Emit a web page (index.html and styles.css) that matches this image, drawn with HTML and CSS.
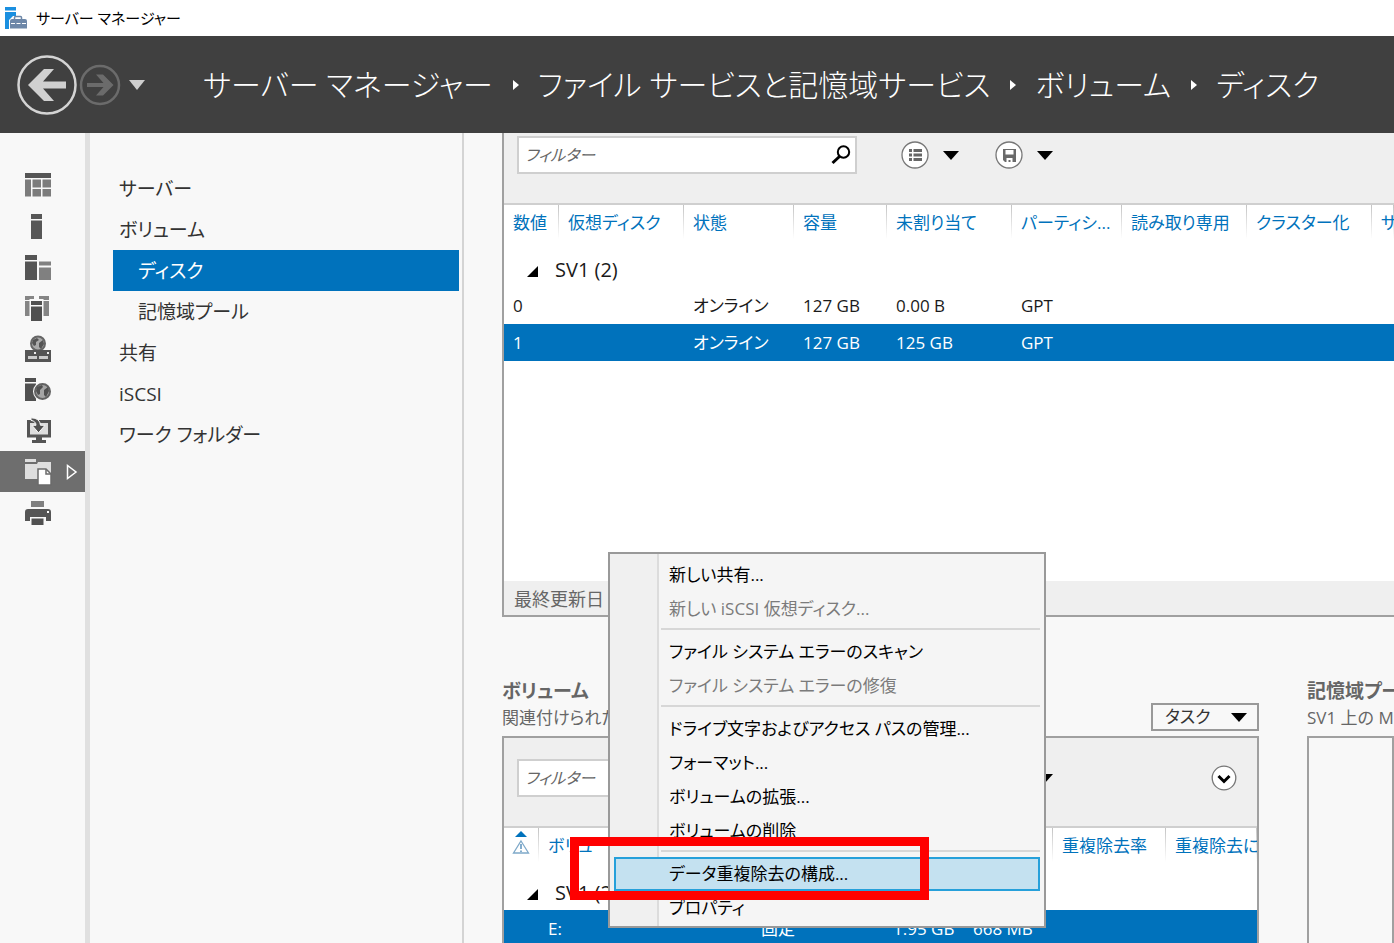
FILE: index.html
```html
<!DOCTYPE html>
<html lang="ja">
<head>
<meta charset="utf-8">
<title>サーバー マネージャー</title>
<link rel="stylesheet" href="styles.css">
</head>
<body>
<div class="titlebar">
  <svg width="24" height="24" viewBox="0 0 24 24" aria-hidden="true">
    <path d="M1 1h11v3.500H1zM1 6h11v4H9L5 14v9H1z" fill="#1a8fe0"/>
    <path d="M10.500 13.500v-2q0-1 1-1h5q1 0 1 1v2" fill="none" stroke="#6d87a8" stroke-width="1.500"/>
    <path d="M6 22.500V15q0-2 2-2h13q2 0 2 2v7.500z" fill="#6d87a8"/>
    <path d="M7 17.500h4M12.500 17.500h4M18 17.500h4" stroke="#fff" stroke-width="1"/>
  </svg>
  <span>サーバー マネージャー</span>
</div>
<header class="header">
  <div class="history">
    <button class="round" aria-label="戻る">
      <svg width="60" height="60" viewBox="0 0 60 60"><circle cx="30" cy="30" r="28.500" fill="none" stroke="#d4d4d4" stroke-width="2.500"/><path d="M11 30 27 14h10L26 26.500h23v7H26L37 46H27z" fill="#d0d0d0"/></svg>
    </button>
    <button class="round" aria-label="進む">
      <svg width="42" height="42" viewBox="0 0 42 42"><circle cx="21" cy="21" r="19" fill="none" stroke="#6b6b6b" stroke-width="2.500"/><path d="M34.500 21 24 10.500h-7L24.500 19H8v4h16.500L17 31.500h7z" fill="#6b6b6b"/></svg>
    </button>
    <button class="round drop" aria-label="履歴">
      <svg width="16" height="10" viewBox="0 0 16 10"><path d="M0 0h16L8 10z" fill="#cfcfcf"/></svg>
    </button>
  </div>
  <nav class="crumbs" aria-label="階層">
    <a href="#">サーバー マネージャー</a><i class="sep"></i><a href="#">ファイル サービスと記憶域サービス</a><i class="sep"></i><a href="#">ボリューム</a><i class="sep"></i><a href="#">ディスク</a>
  </nav>
</header>
<div class="body">
  <nav class="rail" aria-label="役割">
    <a href="#" aria-label="ダッシュボード"><svg width="28" height="28" viewBox="0 0 28 28"><path d="M1 2h26v5H1z" fill="#555"/><path d="M1 8.500h6v17H1zM8.500 8.500h8.500v8H8.500zM18.500 8.500H27v8h-8.500zM8.500 18h8.500v7.500H8.500zM18.500 18H27v7.500h-8.500z" fill="#7c7c7c"/></svg></a>
    <a href="#" aria-label="ローカル サーバー"><svg width="28" height="28" viewBox="0 0 28 28"><path d="M7 2h11v5H7zM7 8.500h11V27H7z" fill="#575757"/></svg></a>
    <a href="#" aria-label="すべてのサーバー"><svg width="28" height="28" viewBox="0 0 28 28"><path d="M1 2h12v5H1zM1 8.500h12V27H1z" fill="#555"/><path d="M15 8.500h12v4H15zM15 14.500h12V27H15z" fill="#808080"/></svg></a>
    <a href="#" aria-label="AD DS"><svg width="28" height="28" viewBox="0 0 28 28"><path d="M1 2h9v4H1zM1 7h9v15H1zM15 2h10v4H15zM15 7h10v15H15z" fill="#858585"/><path d="M5.500 5h14v22h-14z" fill="#f8f8f8"/><path d="M7 7h11v4H7zM7 12.500h11V27H7z" fill="#505050"/></svg></a>
    <a href="#" aria-label="DHCP"><svg width="28" height="28" viewBox="0 0 28 28"><circle cx="14" cy="8.500" r="7" fill="#aaa" stroke="#666" stroke-width="2"/><path d="M9 5l4-2 2 2-3 2v3l-2 1-2-3zM15 8l4-3 1 4-3 5-2-2z" fill="#555"/><path d="M1 15h26v12H1z" fill="#555"/><path d="M4 21h9v3H4zM15 21h9v3h-9z" fill="#ccc"/><path d="M10 17h2v2h-2zM23 17h2v2h-2z" fill="#eee"/></svg></a>
    <a href="#" aria-label="DNS"><svg width="28" height="28" viewBox="0 0 28 28"><path d="M1 2h11v4H1zM1 7.500h11V25H1z" fill="#505050"/><circle cx="18.500" cy="15.500" r="9.500" fill="#f8f8f8"/><circle cx="18.500" cy="15.500" r="7.500" fill="#a5a5a5" stroke="#626262" stroke-width="2"/><path d="M13 11l5-2 1 2-3 3v4l-2 1-2-4zM20 14l4-3 1 4-3 6-2-2z" fill="#505050"/></svg></a>
    <a href="#" aria-label="リモート アクセス"><svg width="28" height="28" viewBox="0 0 28 28"><path d="M4.500 4.500h21v14.500h-21z" fill="#ddd" stroke="#555" stroke-width="3"/><path d="M12 20h6v3h4v3H8v-3h4z" fill="#555"/><path d="M7 .8q9 .2 9.500 7.500h4.500l-6.500 7.500-6.500-7.500h4q0-4-5-5z" fill="#505050" stroke="#f8f8f8" stroke-width="1"/></svg></a>
    <a href="#" class="on" aria-label="ファイル サービス"><svg width="28" height="28" viewBox="0 0 28 28"><path d="M1 4V1h11v3zM1 6h12l1-2h13v17H1z" fill="#dedede"/><path d="M14 11h8l5 5v11H14z" fill="#fff" stroke="#6b6b6b" stroke-width="1.500"/><path d="M22 11v5h5" fill="none" stroke="#6b6b6b" stroke-width="1.500"/></svg><svg class="more" width="12" height="16" viewBox="0 0 12 16"><path d="M1.500 1.500v13l8.500-6.500z" fill="none" stroke="#fff" stroke-width="1.500"/></svg></a>
    <a href="#" aria-label="印刷サービス"><svg width="28" height="28" viewBox="0 0 28 28"><path d="M7 2h13v6H7z" fill="#808080"/><path d="M1 13q0-3 3-3h20q3 0 3 3v9h-5v-4H6v4H1z" fill="#555"/><path d="M7.500 19.500h12V26h-12z" fill="#505050"/><path d="M23 12h2v2h-2z" fill="#fff"/></svg></a>
  </nav>
  <nav class="side" aria-label="ファイル サービスと記憶域サービス">
    <a href="#">サーバー</a>
    <a href="#">ボリューム</a>
    <a href="#" class="sub on">ディスク</a>
    <a href="#" class="sub">記憶域プール</a>
    <a href="#">共有</a>
    <a href="#">iSCSI</a>
    <a href="#">ワーク フォルダー</a>
  </nav>
  <main class="main">
    <section class="panel disks">
      <div class="toolbar">
        <div class="filter">
          <input type="text" placeholder="フィルター" aria-label="フィルター">
          <svg width="20" height="20" viewBox="0 0 20 20" aria-hidden="true"><circle cx="12.500" cy="7" r="5.700" fill="none" stroke="#000" stroke-width="2"/><path d="M8.500 11.500 1.500 18" stroke="#000" stroke-width="3"/></svg>
        </div>
        <button class="tool" aria-label="条件"><svg width="28" height="28" viewBox="0 0 28 28"><circle cx="14" cy="14" r="13" fill="#fff" stroke="#777" stroke-width="1.300"/><path d="M8 8h3v3H8zM8 12.500h3v3H8zM8 17h3v3H8zM12.500 8H21v3h-8.500zM12.500 12.500H21v3h-8.500zM12.500 17H21v3h-8.500z" fill="#666"/></svg><i class="caret"></i></button>
        <button class="tool" aria-label="保存"><svg width="28" height="28" viewBox="0 0 28 28"><circle cx="14" cy="14" r="13" fill="#fff" stroke="#777" stroke-width="1.300"/><path d="M8 8h13v13H10l-2-2z" fill="#6a6a6a"/><path d="M10.500 9h8v4.500h-8zM11.500 17h6v4h-2v-2h-2v2h-2z" fill="#fff"/></svg><i class="caret"></i></button>
      </div>
      <table class="grid">
        <colgroup><col class="w55"><col class="w125"><col class="w110"><col class="w93"><col class="w125"><col class="w110"><col class="w125"><col class="w125"><col></colgroup>
        <thead><tr><th>数値</th><th>仮想ディスク</th><th>状態</th><th>容量</th><th>未割り当て</th><th>パーティシ...</th><th>読み取り専用</th><th>クラスター化</th><th>サ</th></tr></thead>
        <tbody>
          <tr class="group"><td colspan="9"><i class="tri"></i>SV1 (2)</td></tr>
          <tr><td>0</td><td></td><td>オンライン</td><td>127 GB</td><td>0.00 B</td><td>GPT</td><td></td><td></td><td></td></tr>
          <tr class="sel"><td>1</td><td></td><td>オンライン</td><td>127 GB</td><td>125 GB</td><td>GPT</td><td></td><td></td><td></td></tr>
        </tbody>
      </table>
      <div class="status">最終更新日</div>
    </section>
    <div class="lower">
      <section class="tile volumes">
        <div class="head">
          <div><h2>ボリューム</h2><p>関連付けられた</p></div>
          <button class="task">タスク<i class="caret"></i></button>
        </div>
        <div class="panel full">
          <div class="toolbar tall">
            <div class="filter"><input type="text" placeholder="フィルター" aria-label="ボリュームのフィルター"></div>
            <button class="tool" aria-label="条件"><i class="blank"></i><i class="caret"></i></button>
            <button class="tool" aria-label="保存"><i class="blank"></i><i class="caret"></i></button>
            <button class="tool end" aria-label="展開"><svg width="26" height="26" viewBox="0 0 26 26"><circle cx="13" cy="13" r="11.800" fill="#fff" stroke="#777" stroke-width="1.300"/><path d="M7.500 11 13 16.500 18.500 11" fill="none" stroke="#000" stroke-width="3"/></svg></button>
          </div>
          <table class="grid">
            <colgroup><col class="w35"><col class="w213"><col class="w132"><col class="w80"><col class="w89"><col class="w113"><col></colgroup>
            <thead><tr><th class="warn"><svg width="18" height="25" viewBox="0 0 18 25" aria-label="警告"><path d="M9 1 15 7H3z" fill="#0072bc"/><path d="M9 11 16.500 23h-15z" fill="#fff" stroke="#7fa9c9" stroke-width="1.300"/><path d="M9 14v5M9 20.500v1.500" stroke="#5c93bd" stroke-width="1.500"/></svg></th><th>ボリューム</th><th></th><th></th><th></th><th>重複除去率</th><th>重複除去に</th></tr></thead>
            <tbody>
              <tr class="group"><td colspan="7"><i class="tri"></i>SV1 (2)</td></tr>
              <tr class="sel"><td></td><td>E:</td><td>固定</td><td>1.95 GB</td><td>668 MB</td><td></td><td></td></tr>
            </tbody>
          </table>
        </div>
      </section>
      <section class="tile pools">
        <div class="head"><div><h2>記憶域プール</h2><p>SV1 上の M</p></div></div>
        <div class="panel full plain"></div>
      </section>
    </div>
  </main>
</div>
<div class="menu" role="menu">
  <button role="menuitem">新しい共有...</button>
  <button role="menuitem" disabled>新しい iSCSI 仮想ディスク...</button>
  <hr>
  <button role="menuitem">ファイル システム エラーのスキャン</button>
  <button role="menuitem" disabled>ファイル システム エラーの修復</button>
  <hr>
  <button role="menuitem">ドライブ文字およびアクセス パスの管理...</button>
  <button role="menuitem">フォーマット...</button>
  <button role="menuitem">ボリュームの拡張...</button>
  <button role="menuitem">ボリュームの削除</button>
  <hr>
  <button role="menuitem" class="hot">データ重複除去の構成...</button>
  <button role="menuitem">プロパティ</button>
</div>
<div class="marker"></div>
</body>
</html>
```
FILE: styles.css
```css
* { box-sizing: border-box; }
html, body { height: 100%; }
body {
  margin: 0;
  display: flex;
  flex-direction: column;
  overflow: hidden;
  background: #f8f8f8;
  color: #1a1a1a;
  font: 17px/24px "Open Sans", "Noto Sans CJK JP", sans-serif;
  font-feature-settings: "palt";
}
button, input { font: inherit; font-feature-settings: inherit; color: inherit; }
button { border: 0; background: none; padding: 0; }
a { color: inherit; text-decoration: none; }
svg { display: block; flex: none; }

.titlebar { flex: none; display: flex; align-items: center; gap: 8px; height: 36px; padding-left: 4px; background: #fff; color: #000; font-size: 15px; white-space: nowrap; }

.header { flex: none; display: flex; align-items: center; height: 97px; background: #404040; color: #fff; }
.history { flex: none; display: flex; align-items: center; width: 203px; padding-left: 17px; gap: 2px; }
.round.drop { margin-left: 6px; }
.crumbs { display: flex; align-items: center; font-size: 30px; line-height: 48px; font-weight: 300; white-space: nowrap; }
.sep { flex: none; margin: 0 19px 0 20px; border: 5px solid transparent; border-left: 6px solid #fff; border-right: 0; }

.body { flex: 1; display: flex; min-height: 0; }
.rail { flex: none; width: 90px; padding-top: 31px; border-right: 5px solid #e0e0e0; }
.rail a { display: flex; align-items: center; height: 41px; padding-left: 24px; gap: 14px; }
.rail .on { background: #6e6e6e; }
.side { flex: none; width: 374px; padding: 35px 3px 0 23px; border-right: 2px solid #d4d4d4; font-size: 19px; color: #333; }
.side a { display: flex; align-items: center; height: 41px; padding-left: 6px; white-space: nowrap; }
.side .sub { padding-left: 25px; }
.side .on { background: #0072bc; color: #fff; }

.main { flex: 1; min-width: 0; display: flex; flex-direction: column; padding-left: 38px; overflow: hidden; }
.panel { border: 2px solid #a0a0a0; background: #fff; overflow: hidden; }
.disks { flex: none; display: flex; flex-direction: column; height: 484px; border-top: 0; border-right: 0; }
.toolbar { display: flex; align-items: flex-start; height: 72px; padding: 3px 20px 0 13px; background: #efefef; border-bottom: 2px solid #cfcfcf; }
.toolbar.tall { height: 90px; padding-top: 21px; }
.filter { flex: none; display: flex; align-items: center; width: 340px; height: 38px; margin-right: 8px; padding: 0 4px 0 6px; border: 2px solid #cfcfcf; background: #fff; }
.filter input { flex: 1; min-width: 0; padding: 0; border: 0; background: none; outline: 0; font-size: 16px; }
.filter input::placeholder { color: #666; font-style: italic; opacity: 1; }
.tool { display: flex; align-items: center; gap: 14px; margin-left: 36px; height: 38px; }
.tool.end { margin-left: auto; }
.blank { width: 28px; }
.caret { flex: none; border: 8px solid transparent; border-top: 9px solid #000; border-bottom: 0; }

.grid { width: 100%; table-layout: fixed; border-collapse: collapse; border-spacing: 0; }
.grid th, .grid td { padding: 0 0 0 9px; text-align: left; font-weight: 400; white-space: nowrap; overflow: hidden; }
.grid th { height: 48px; padding-top: 6px; vertical-align: top; color: #0072bc; background: linear-gradient(#c4c4c4, #fff) right top / 1px 34px no-repeat; }
.grid th.warn { padding-top: 2px; padding-left: 8px; }
.grid td { height: 37px; }
.grid .group td { height: 34px; padding-left: 23px; font-size: 20px; }
.grid .sel { background: #0072bc; color: #fff; }
.tri { display: inline-block; margin-right: 17px; border-left: 11px solid transparent; border-bottom: 11px solid #000; }
.w35 { width: 35px; } .w55 { width: 55px; } .w80 { width: 80px; } .w89 { width: 89px; } .w93 { width: 93px; }
.w110 { width: 110px; } .w113 { width: 113px; } .w125 { width: 125px; } .w132 { width: 132px; } .w213 { width: 213px; }
.status { margin-top: auto; height: 34px; padding: 6px 10px 4px; background: #efefef; color: #666; font-size: 18px; }

.lower { flex: 1; display: flex; gap: 48px; min-height: 0; padding-top: 60px; }
.tile { display: flex; flex-direction: column; }
.volumes { flex: none; width: 757px; }
.pools { flex: 1; min-width: 0; }
.head { display: flex; justify-content: space-between; align-items: flex-end; height: 59px; padding-bottom: 5px; color: #666; white-space: nowrap; }
.head h2 { margin: 0; font-size: 19px; line-height: 28px; font-weight: 700; }
.head p { margin: 0; line-height: 26px; }
.full { flex: 1; border-bottom: 0; }
.plain { background: #f8f8f8; }
.task { display: flex; align-items: center; justify-content: space-between; width: 108px; height: 28px; padding: 0 10px 0 12px; border: 2px solid #999; background: #f8f8f8; color: #333; }

.menu {
  position: absolute; left: 608px; top: 552px; width: 438px; padding: 4px 4px 1px;
  border: 2px solid #999;
  background: linear-gradient(#dcdcdc, #dcdcdc) 47px 0 / 2px 100% no-repeat, linear-gradient(90deg, #f0f0f0 47px, #f5f5f5 47px);
  color: #000;
}
.menu button { display: block; width: 100%; height: 34px; padding: 0 0 0 53px; border: 2px solid transparent; text-align: left; line-height: 28px; white-space: nowrap; }
.menu button:disabled { color: #7b7b7b; }
.menu .hot { background: #c4e1f0; border-color: #26a0da; }
.menu hr { height: 2px; margin: 2px 0 5px 47px; border: 0; background: #d7d7d7; }
.marker { position: absolute; left: 570px; top: 837px; width: 359px; height: 63px; border: 9px solid #f00; }
```
